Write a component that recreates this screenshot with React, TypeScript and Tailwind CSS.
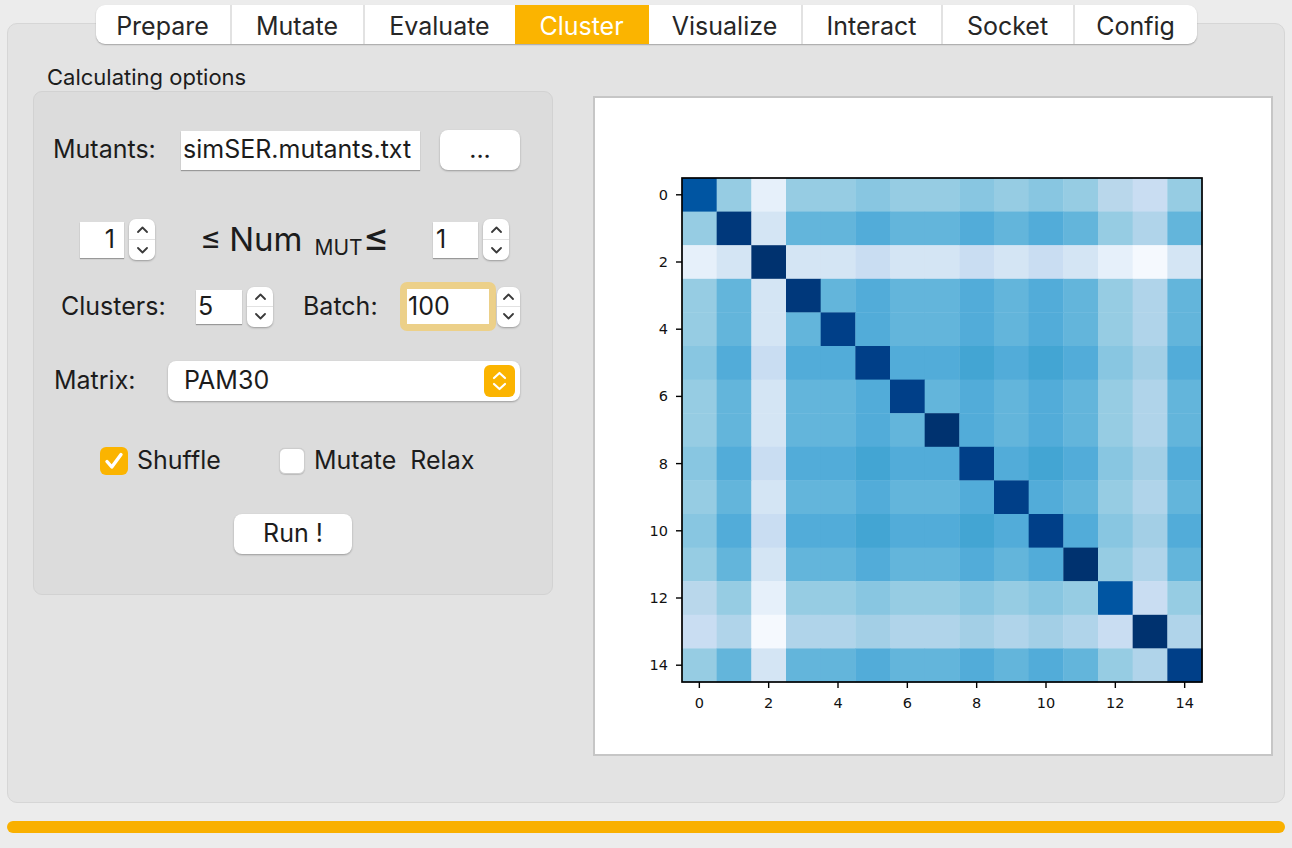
import React from 'react';

const TABS = [
  { label: 'Prepare', w: 'w-[134px]' },
  { label: 'Mutate', w: 'w-[133px]' },
  { label: 'Evaluate', w: 'w-[152px]' },
  { label: 'Cluster', w: 'w-[134px]', active: true },
  { label: 'Visualize', w: 'w-[152px]' },
  { label: 'Interact', w: 'w-[140px]' },
  { label: 'Socket', w: 'w-[132px]' },
  { label: 'Config', w: 'w-[124px]' },
];

// Blues-like colour levels picked from the figure
const CMAP: Record<string, string> = {
  a: '#f5f9fe',
  b: '#e6f0fa',
  c: '#d4e5f4',
  d: '#c9ddf2',
  e: '#b9d7eb',
  f: '#b0d4ea',
  g: '#a3cfe6',
  h: '#96cce3',
  i: '#88c6e1',
  j: '#63b5db',
  k: '#52acd9',
  l: '#43a5d3',
  W: '#00387b',
  X: '#0055a2',
  Y: '#003f88',
  Z: '#00326f',
};

const ROWS = [
  'Xhbhhihhihihedh',
  'hWcjjkjjkjkjhfj',
  'bcZccdccdcdcbac',
  'hjcWjkjjkjkjhfj',
  'hjcjYkjjkjkjhfj',
  'ikdkkYkklklkigk',
  'hjcjjkYjkjkjhfj',
  'hjcjjkjZkjkjhfj',
  'ikdkklkkYklkigk',
  'hjcjjkjjkYkjhfj',
  'ikdkklkklkYkigk',
  'hjcjjkjjkjkZhfj',
  'ehbhhihhihihXdh',
  'dfaffgffgfgfdZf',
  'hjcjjkjjkjkjhfY',
];

function Stepper({ h = 'h-[41px]', w = 'w-[26px]' }: { h?: string; w?: string }) {
  return (
    <div className={`${w} ${h} bg-white rounded-[7px] shadow-[0_1px_2px_rgba(0,0,0,0.3)] flex flex-col`}>
      <div className="flex-1 flex items-center justify-center border-b border-[#e2e2e2]">
        <svg width="11" height="7" viewBox="0 0 11 7">
          <path d="M1 6 L5.5 1.5 L10 6" fill="none" stroke="#3a3a3a" strokeWidth="1.8" strokeLinecap="round" strokeLinejoin="round" />
        </svg>
      </div>
      <div className="flex-1 flex items-center justify-center">
        <svg width="11" height="7" viewBox="0 0 11 7">
          <path d="M1 1 L5.5 5.5 L10 1" fill="none" stroke="#3a3a3a" strokeWidth="1.8" strokeLinecap="round" strokeLinejoin="round" />
        </svg>
      </div>
    </div>
  );
}

function Heatmap() {
  const x0 = 87;
  const y0 = 80;
  const cw = 520 / 15;
  const ch = 504 / 15;
  const ticks = [0, 2, 4, 6, 8, 10, 12, 14];
  return (
    <svg width="676" height="656" viewBox="0 0 676 656">
      {ROWS.map((row, r) =>
        row.split('').map((k, c) => (
          <rect key={`${r}-${c}`} x={x0 + c * cw} y={y0 + r * ch} width={cw + 0.4} height={ch + 0.4} fill={CMAP[k]} />
        ))
      )}
      <rect x={x0} y={y0} width={520} height={504} fill="none" stroke="#000" strokeWidth="1.7" />
      {ticks.map((t) => (
        <g key={`y${t}`}>
          <line x1={x0 - 6} x2={x0} y1={y0 + (t + 0.5) * ch} y2={y0 + (t + 0.5) * ch} stroke="#000" strokeWidth="1.4" />
          <text x={x0 - 14} y={y0 + (t + 0.5) * ch + 5} textAnchor="end" fontFamily="DejaVu Sans" fontSize="14.5" fill="#111">
            {t}
          </text>
        </g>
      ))}
      {ticks.map((t) => (
        <g key={`x${t}`}>
          <line x1={x0 + (t + 0.5) * cw} x2={x0 + (t + 0.5) * cw} y1={y0 + 504} y2={y0 + 510} stroke="#000" strokeWidth="1.4" />
          <text x={x0 + (t + 0.5) * cw} y={y0 + 504 + 26} textAnchor="middle" fontFamily="DejaVu Sans" fontSize="14.5" fill="#111">
            {t}
          </text>
        </g>
      ))}
    </svg>
  );
}

export default function App() {
  return (
    <div className="w-[1292px] h-[848px] bg-[#ececec] pt-[5px] overflow-hidden font-['Inter',sans-serif] text-[#1c1c1c]">
      {/* tab bar */}
      <div className="relative z-10 mx-auto w-[1101px] h-[39px] flex bg-white rounded-[9px] shadow-[0_1px_1.5px_rgba(0,0,0,0.28)] overflow-hidden">
        {TABS.map((t, i) => (
          <div
            key={t.label}
            className={`${t.w} h-full flex items-center justify-center pt-[5px] text-[25px] ${
              t.active ? 'bg-[#fbb400] text-white' : 'text-[#262626]'
            } ${i > 0 && !t.active && !TABS[i - 1].active ? 'border-l-2 border-[#e2e2e2]' : ''}`}
          >
            {t.label}
          </div>
        ))}
      </div>

      {/* tab panel */}
      <div className="mx-[7px] -mt-[21px] h-[780px] bg-[#e3e3e3] border border-[#d6d6d6] rounded-[10px] flex items-start pl-[25px]">
        <div className="pt-[41px]">
          <div className="pl-[14px] text-[22px] leading-[24px]">Calculating options</div>
          <div className="mt-[2px] w-[520px] h-[504px] bg-[#dcdcdc] border border-[#d2d2d2] rounded-[9px] flex flex-col">
            {/* mutants */}
            <div className="mt-[38px] h-[40px] flex items-center pl-[19px]">
              <div className="w-[128px] text-[25px]">Mutants:</div>
              <div className="w-[239px] h-[39px] bg-white shadow-[0_1px_1px_rgba(0,0,0,0.3)] flex items-center pl-[2px] text-[25px] overflow-hidden whitespace-nowrap">
                simSER.mutants.txt
              </div>
              <div className="ml-[20px] w-[80px] h-[40px] bg-white rounded-[8px] shadow-[0_1px_2px_rgba(0,0,0,0.3)] flex items-center justify-center text-[25px]">
                ...
              </div>
            </div>

            {/* num mut range */}
            <div className="mt-[49px] h-[41px] flex items-center">
              <div className="ml-[46px] w-[44px] h-[36px] bg-white shadow-[0_1px_1px_rgba(0,0,0,0.3)] flex items-center justify-end pr-[9px] text-[25px]">
                1
              </div>
              <div className="ml-[5px]">
                <Stepper />
              </div>
              <div className="ml-[45px] w-[233px] flex items-baseline whitespace-nowrap">
                <span className="text-[32px] leading-none relative -top-[2px]">≤</span>
                <span className="ml-[8px] text-[33px]">Num</span>
                <span className="ml-[12px] text-[21px] relative top-[4px]">MUT</span>
                <span className="text-[40px] leading-none">≤</span>
              </div>
              <div className="w-[45px] h-[36px] bg-white shadow-[0_1px_1px_rgba(0,0,0,0.3)] flex items-center pl-[3px] text-[25px]">
                1
              </div>
              <div className="ml-[5px]">
                <Stepper />
              </div>
            </div>

            {/* clusters / batch */}
            <div className="mt-[22px] h-[49px] flex items-center">
              <div className="ml-[27px] w-[135px] text-[25px]">Clusters:</div>
              <div className="w-[46px] h-[34px] bg-white shadow-[0_1px_1px_rgba(0,0,0,0.3)] flex items-center pl-[2px] text-[25px]">
                5
              </div>
              <div className="ml-[5px]">
                <Stepper h="h-[40px]" />
              </div>
              <div className="ml-[30px] w-[97px] text-[25px]">Batch:</div>
              <div className="w-[96px] h-[49px] rounded-[7px] bg-[#ecd089] p-[7px]">
                <div className="w-full h-full bg-white flex items-center pl-[1px] text-[25px]">100</div>
              </div>
              <div className="ml-[1px]">
                <Stepper h="h-[40px]" w="w-[23px]" />
              </div>
            </div>

            {/* matrix */}
            <div className="mt-[30px] h-[40px] flex items-center">
              <div className="ml-[20px] w-[114px] text-[25px]">Matrix:</div>
              <div className="w-[352px] h-[40px] bg-white rounded-[8px] shadow-[0_1px_2px_rgba(0,0,0,0.3)] flex items-center justify-between pl-[16px] pr-[5px]">
                <span className="text-[25px]">PAM30</span>
                <div className="w-[31px] h-[32px] rounded-[6px] bg-[#fbb400] flex items-center justify-center">
                  <svg width="31" height="32" viewBox="0 0 31 32">
                    <path d="M10 13 L15.5 8 L21 13" fill="none" stroke="#fff" strokeWidth="2.2" strokeLinecap="round" strokeLinejoin="round" />
                    <path d="M10 19 L15.5 24 L21 19" fill="none" stroke="#fff" strokeWidth="2.2" strokeLinecap="round" strokeLinejoin="round" />
                  </svg>
                </div>
              </div>
            </div>

            {/* checkboxes */}
            <div className="mt-[46px] h-[28px] flex items-center">
              <div className="ml-[66px] w-[179px] flex items-center">
                <div className="w-[28px] h-[28px] rounded-[6px] bg-[#fbb400] flex items-center justify-center">
                  <svg width="28" height="28" viewBox="0 0 28 28">
                    <path d="M7 14.5 L11.8 20 L21 7.5" fill="none" stroke="#fff" strokeWidth="3.4" strokeLinecap="round" strokeLinejoin="round" />
                  </svg>
                </div>
                <span className="ml-[9px] text-[25px]">Shuffle</span>
              </div>
              <div className="w-[26px] h-[26px] rounded-[6px] bg-white border border-[#cdcdcd] shadow-[0_0.5px_1px_rgba(0,0,0,0.15)]" />
              <span className="ml-[9px] text-[25px] whitespace-pre">Mutate  Relax</span>
            </div>

            {/* run */}
            <div className="mt-[39px] h-[40px] flex items-center">
              <div className="ml-[200px] w-[118px] h-[40px] bg-white rounded-[8px] shadow-[0_1px_2px_rgba(0,0,0,0.3)] flex items-center justify-center text-[25px]">
                Run !
              </div>
            </div>
          </div>
        </div>

        {/* figure */}
        <div className="ml-[40px] mt-[72px] w-[680px] h-[660px] bg-white border-2 border-[#c6c6c6]">
          <Heatmap />
        </div>
      </div>

      {/* progress */}
      <div className="mx-[7px] mt-[18px] h-[12px] rounded-full bg-[#f9b000]" />
    </div>
  );
}
